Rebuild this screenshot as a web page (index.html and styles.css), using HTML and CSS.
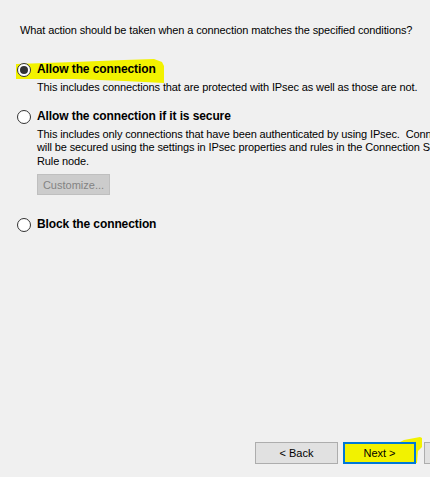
FILE: index.html
```html
<!DOCTYPE html>
<html>
<head>
<meta charset="utf-8">
<link rel="stylesheet" href="styles.css">
</head>
<body>
<div class="page">
  <p class="question">What action should be taken when a connection matches the specified conditions?</p>
  <div class="options">
    <div class="option first">
      <span class="radio checked"></span>
      <div class="body">
        <div class="title">Allow the connection</div>
        <div class="desc">This includes connections that are protected with IPsec as well as those are not.</div>
      </div>
    </div>
    <div class="option second">
      <span class="radio"></span>
      <div class="body">
        <div class="title">Allow the connection if it is secure</div>
        <div class="desc">This includes only connections that have been authenticated by using IPsec.&nbsp; Connections<br>will be secured using the settings in IPsec properties and rules in the Connection Security<br>Rule node.</div>
        <button class="btn disabled">Customize...</button>
      </div>
    </div>
    <div class="option third">
      <span class="radio"></span>
      <div class="body">
        <div class="title">Block the connection</div>
      </div>
    </div>
  </div>
  <div class="footer">
    <button class="btn">&lt; Back</button>
    <button class="btn primary">Next &gt;</button>
    <button class="btn extra" aria-label="Cancel"></button>
  </div>
  <svg class="hl hl-top" width="152" height="28" viewBox="0 0 152 28"><path d="M2 7 L60 5 L110 3 L140 2 L148 5 L150 9 L150 26 L110 24 L60 22 L2 22 Z" fill="#f2f200" /></svg>
  <svg class="hl hl-next" width="84" height="30" viewBox="0 0 84 30"><path d="M2 9 L56 8 L62 5 L78 2 L80 3 L80 12 L76 16 L75 28 L2 28 Z" fill="#f2f200" /></svg>
</div>
</body>
</html>
```
FILE: styles.css
```css
html, body {
  margin: 0;
  padding: 0;
  background: #f0f0f0;
  overflow: hidden;
}
.page {
  position: relative;
  width: 430px;
  height: 477px;
  display: flex;
  flex-direction: column;
  font-family: "Liberation Sans", Arial, sans-serif;
  font-size: 11px;
  letter-spacing: -0.12px;
  color: #000;
  overflow: hidden;
}
.question {
  margin: 23px 0 0 20px;
  line-height: 15px;
  white-space: nowrap;
}
.option {
  display: flex;
  gap: 6px;
  position: relative;
  z-index: 2;
}
.options {
  margin: 25px 0 0 17px;
  display: flex;
  flex-direction: column;
}
.second { margin-top: 15px; }
.third { margin-top: 23px; }
.radio {
  width: 12px;
  height: 12px;
  border: 1px solid #333;
  border-radius: 50%;
  background: #fff;
  flex: none;
  display: flex;
  align-items: center;
  justify-content: center;
}
.radio.checked::after {
  content: "";
  width: 8px;
  height: 8px;
  border-radius: 50%;
  background: #333;
}
.body { display: flex; flex-direction: column; }
.title {
  font-weight: bold;
  font-size: 12px;
  letter-spacing: -0.1px;
  line-height: 14px;
  margin-top: -1px;
}
.desc {
  margin-top: 5px;
  line-height: 13.5px;
  white-space: nowrap;
}
.btn {
  font-family: "Liberation Sans", Arial, sans-serif;
  font-size: 11px;
  height: 22px;
  padding: 0;
  border: 1px solid #adadad;
  background: #e1e1e1;
  color: #000;
  box-sizing: border-box;
}
.btn.disabled {
  margin-top: 6px;
  width: 73px;
  height: 21px;
  background: #cccccc;
  border-color: #bfbfbf;
  color: #838383;
}
.footer {
  margin-top: auto;
  margin-bottom: 13px;
  display: flex;
  gap: 5px;
  padding-left: 255px;
  position: relative;
  z-index: 2;
}
.footer .btn { width: 83px; flex: none; }
.footer .btn.primary {
  width: 73px;
  border: 2px solid #0078d7;
  background: transparent;
}
.footer .btn.extra { margin-left: 3px; }
.hl { position: absolute; z-index: 1; }
.hl-top { left: 14px; top: 57px; }
.hl-next { left: 342px; top: 435px; }
```
